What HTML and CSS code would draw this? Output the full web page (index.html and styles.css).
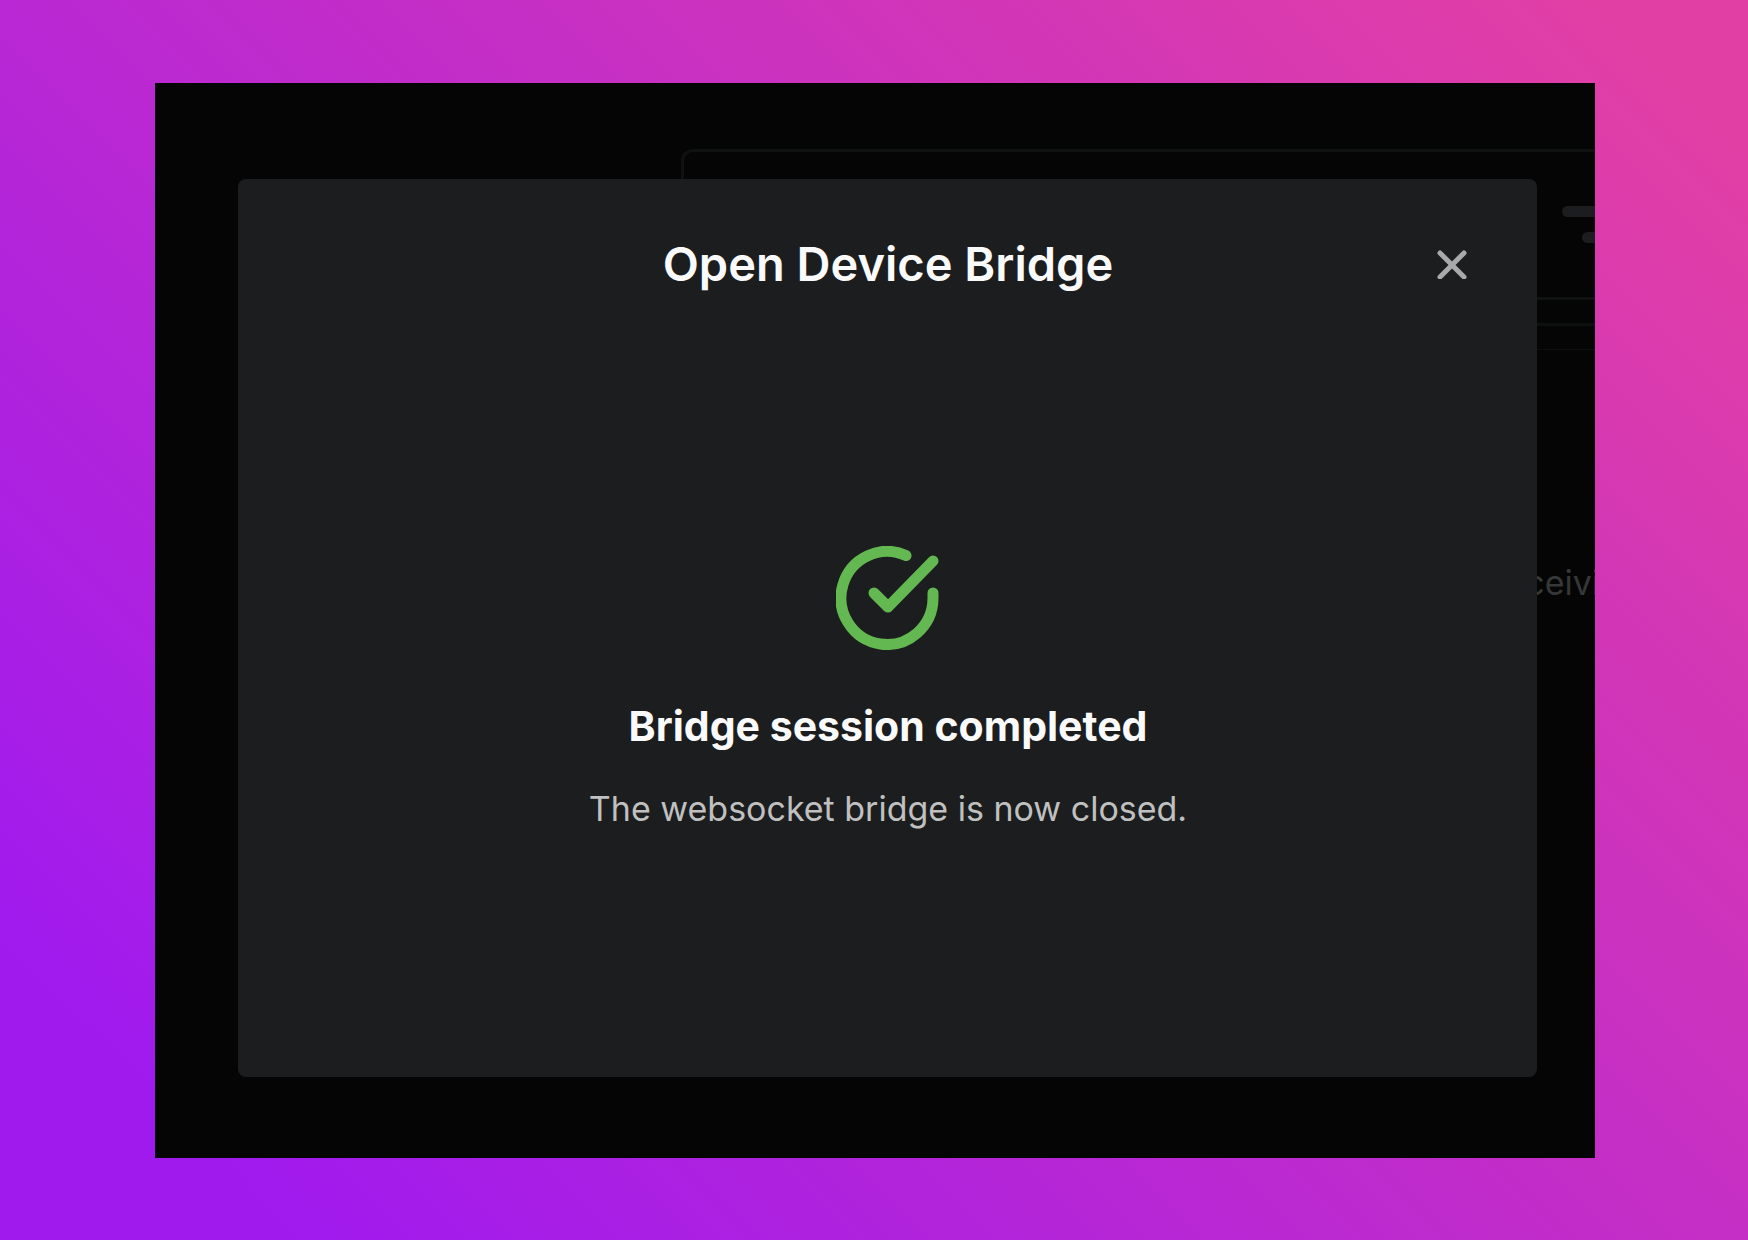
FILE: index.html
```
<!DOCTYPE html>
<html lang="en">
<head>
    <meta charset="utf-8">
    <title>Open Device Bridge</title>
    <link rel="stylesheet" href="styles.css">
</head>
<body>
    <div class="window">
        <!-- dimmed page behind the dialog -->
        <div class="backdrop">
            <div class="card">
                <span class="line"></span>
                <span class="line line-short"></span>
            </div>
            <div class="panel">
                <div class="panel-header"></div>
                <p class="status">Receiving</p>
            </div>
        </div>

        <div class="modal" role="dialog" aria-labelledby="modalTitle">
            <div class="modal-header">
                <h1 id="modalTitle">Open Device Bridge</h1>
                <button class="close" type="button" aria-label="Close">
                    <svg width="30" height="30" viewBox="0 0 30 30" fill="none" stroke="currentColor" stroke-width="5" stroke-linecap="round">
                        <path d="M3 4l24 24M27 4L3 28"/>
                    </svg>
                </button>
            </div>
            <div class="modal-body">
                <svg class="check" viewBox="0 0 104 104" fill="none" stroke="currentColor" stroke-width="11" stroke-linecap="round" stroke-linejoin="round">
                    <path d="M97 47V52A46 46.5 0 1 1 70 9.6"/>
                    <path d="M38 47L52 61L97 15"/>
                </svg>
                <h2>Bridge session completed</h2>
                <p>The websocket bridge is now closed.</p>
            </div>
        </div>
    </div>
</body>
</html>
```
FILE: styles.css
```
* {
    box-sizing: border-box;
}
body {
    margin: 0;
    min-height: 100vh;
    display: flex;
    padding: 83px 153px 82px 155px;
    font-family: Inter, "Liberation Sans", sans-serif;
    background: linear-gradient(45deg, #a01aee 10%, #e23fa5 95%);
}
h1, h2, p {
    margin: 0;
}
.window {
    position: relative;
    flex: 1;
    display: flex;
    padding: 96px 58px 81px 83px;
    overflow: hidden;
    background-color: #050505;
}

/* page behind */
.backdrop {
    position: absolute;
    top: 66px;
    right: -50px;
    bottom: 0;
    left: 526px;
}
.card {
    height: 151px;
    display: flex;
    flex-direction: column;
    align-items: flex-end;
    gap: 15px;
    padding: 54px 0 0;
    border: 3px solid #101212;
    border-radius: 12px;
}
.line {
    width: 80px;
    height: 11px;
    border-radius: 6px;
    background-color: #1c1d1e;
}
.line-short {
    width: 60px;
}
.panel {
    margin-top: 23px;
    border-top: 3px solid #0e1010;
}
.panel-header {
    height: 24px;
    border-bottom: 1px solid #0e1010;
}
.status {
    padding: 213px 4px 0 0;
    text-align: right;
    font-size: 34px;
    line-height: 40px;
    color: #363838;
}

/* dialog */
.modal {
    position: relative;
    flex: 1;
    display: flex;
    flex-direction: column;
    padding: 55px 67px 0 68px;
    border-radius: 8px;
    background-color: #1c1d1f;
}
.modal-header {
    display: grid;
    grid-template-columns: 36px 1fr 36px;
    align-items: center;
    margin-bottom: 8px;
}
.modal-header h1 {
    grid-column: 2;
    text-align: center;
    font-size: 47px;
    line-height: 60px;
    font-weight: 600;
    color: #fafafa;
}
.close {
    display: flex;
    justify-content: center;
    padding: 3px;
    border: none;
    background: none;
    color: #a8a9a9;
    cursor: pointer;
}
.modal-body {
    flex: 1;
    display: flex;
    flex-direction: column;
    align-items: center;
    justify-content: center;
    text-align: center;
}
.check {
    width: 104px;
    height: 104px;
    margin-bottom: 50px;
    color: #63b851;
}
.modal-body h2 {
    margin-bottom: 32px;
    font-size: 41px;
    line-height: 52px;
    font-weight: 700;
    color: #fafafa;
}
.modal-body p {
    font-size: 34px;
    line-height: 50px;
    color: #c0c0c0;
}
```
